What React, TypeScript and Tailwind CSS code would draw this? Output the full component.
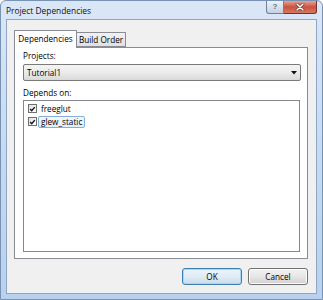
import React from "react";

function Check() {
  return (
    <svg width="8" height="8" viewBox="0 0 8 8" className="block">
      <path d="M1.3 4.1 L3.1 5.9 L6.6 1.9" fill="none" stroke="#111111" strokeWidth="1.6" />
    </svg>
  );
}

function CheckBox() {
  return (
    <div className="w-[9px] h-[9px] border border-[#6f6f6f] bg-gradient-to-br from-[#e0e0e0] to-[#ffffff] flex items-center justify-center shrink-0">
      <Check />
    </div>
  );
}

export default function App() {
  return (
    <div className="w-[323px] h-[300px] overflow-hidden bg-white font-['Open_Sans',sans-serif] text-[8.2px] text-[#000000]">
      <div className="w-full h-full flex flex-col rounded-t-[6px] border border-[#7892b4] bg-gradient-to-b from-[#dae7f7] via-[#c6daf1] to-[#b9d1ee]">
        {/* title bar */}
        <div className="h-[18px] flex items-start shrink-0">
          <div className="pl-[5px] pt-[5px] leading-[10px] text-[8.4px] text-[#111111]">Project Dependencies</div>
          <div className="ml-auto mr-[5px] flex">
            <div className="w-[18px] h-[13px] border border-[#6e819a] border-t-0 rounded-bl-[3px] bg-gradient-to-b from-[#eef3fa] to-[#c3d1e3] flex items-center justify-center">
              <span className="font-['Liberation_Sans',sans-serif] font-bold text-[8px] leading-[8px] text-[#5f7089]">?</span>
            </div>
            <div className="w-[33px] h-[13px] border border-[#7a2f25] border-t-0 border-l-0 rounded-br-[3px] bg-gradient-to-b from-[#e6a393] via-[#c9523f] to-[#d57a62] flex items-center justify-center">
              <svg width="10" height="8" viewBox="0 0 10 8">
                <path d="M2 1 L8 7 M8 1 L2 7" stroke="#5a1e17" strokeWidth="2.6" strokeLinecap="round" />
                <path d="M2 1 L8 7 M8 1 L2 7" stroke="#ffffff" strokeWidth="1.6" strokeLinecap="round" />
              </svg>
            </div>
          </div>
        </div>
        {/* client */}
        <div className="flex-1 mx-[5px] mb-[5px] border border-[#8ea6c4] bg-[#f0f0f0] flex flex-col pl-[7px] pr-[8px] pt-[10px] pb-[8px]">
          {/* tabs */}
          <div className="h-[17px] flex items-end shrink-0">
            <div className="relative z-10 w-[63px] h-[18px] -mb-[1px] border border-b-0 border-[#898c95] bg-white flex items-center justify-center pb-[1px] rounded-t-[1px]">
              <span className="leading-[10px]">Dependencies</span>
            </div>
            <div className="w-[49px] h-[15px] border border-l-0 border-[#898c95] bg-gradient-to-b from-[#f2f2f2] to-[#e1e1e1] flex items-center justify-center rounded-tr-[1px]">
              <span className="leading-[10px]">Build Order</span>
            </div>
          </div>
          {/* panel */}
          <div className="flex-1 border border-[#898c95] bg-white flex flex-col pl-[8px] pr-[6px] pt-[3px] pb-[6px]">
            <div className="leading-[10px] h-[10px]">Projects:</div>
            <div className="mt-[3px] h-[17px] border border-[#7a7a7a] rounded-[2px] bg-gradient-to-b from-[#f4f4f4] via-[#ebebeb] to-[#d9d9d9] flex items-center pl-[3px] pr-[3px]">
              <span className="leading-[10px]">Tutorial1</span>
              <svg width="6" height="4" viewBox="0 0 6 4" className="ml-auto">
                <path d="M0 0 L6 0 L3 3.5 Z" fill="#111111" />
              </svg>
            </div>
            <div className="mt-[7px] leading-[10px] h-[10px]">Depends on:</div>
            <div className="mt-[2px] flex-1 mr-[1px] border border-[#828790] bg-white flex flex-col pt-[1px] pl-[4px]">
              <div className="h-[13px] flex items-center">
                <CheckBox />
                <div className="ml-[1px] h-[12px] border border-transparent px-[2px] flex items-center">
                  <span className="leading-[10px]">freeglut</span>
                </div>
              </div>
              <div className="h-[13px] flex items-center">
                <CheckBox />
                <div className="ml-[1px] h-[12px] border border-[#84acdd] rounded-[2px] bg-gradient-to-b from-[#f3f8fd] to-[#e1edfb] px-[2px] flex items-center">
                  <span className="leading-[10px]">glew_static</span>
                </div>
              </div>
            </div>
          </div>
          {/* buttons */}
          <div className="mt-[9px] h-[17px] flex justify-end gap-[6px] shrink-0">
            <div className="w-[60px] h-[17px] border border-[#3c7fb1] rounded-[3px] bg-gradient-to-b from-[#eaf4fb] via-[#e0ecf6] to-[#c9dbe9] flex items-center justify-center shadow-[inset_0_0_0_1px_#a9d7f5]">
              <span className="leading-[10px]">OK</span>
            </div>
            <div className="w-[60px] h-[17px] border border-[#707070] rounded-[3px] bg-gradient-to-b from-[#f2f2f2] via-[#e6e6e6] to-[#d2d2d2] flex items-center justify-center shadow-[inset_0_0_0_1px_#fcfcfc]">
              <span className="leading-[10px]">Cancel</span>
            </div>
          </div>
        </div>
      </div>
    </div>
  );
}
